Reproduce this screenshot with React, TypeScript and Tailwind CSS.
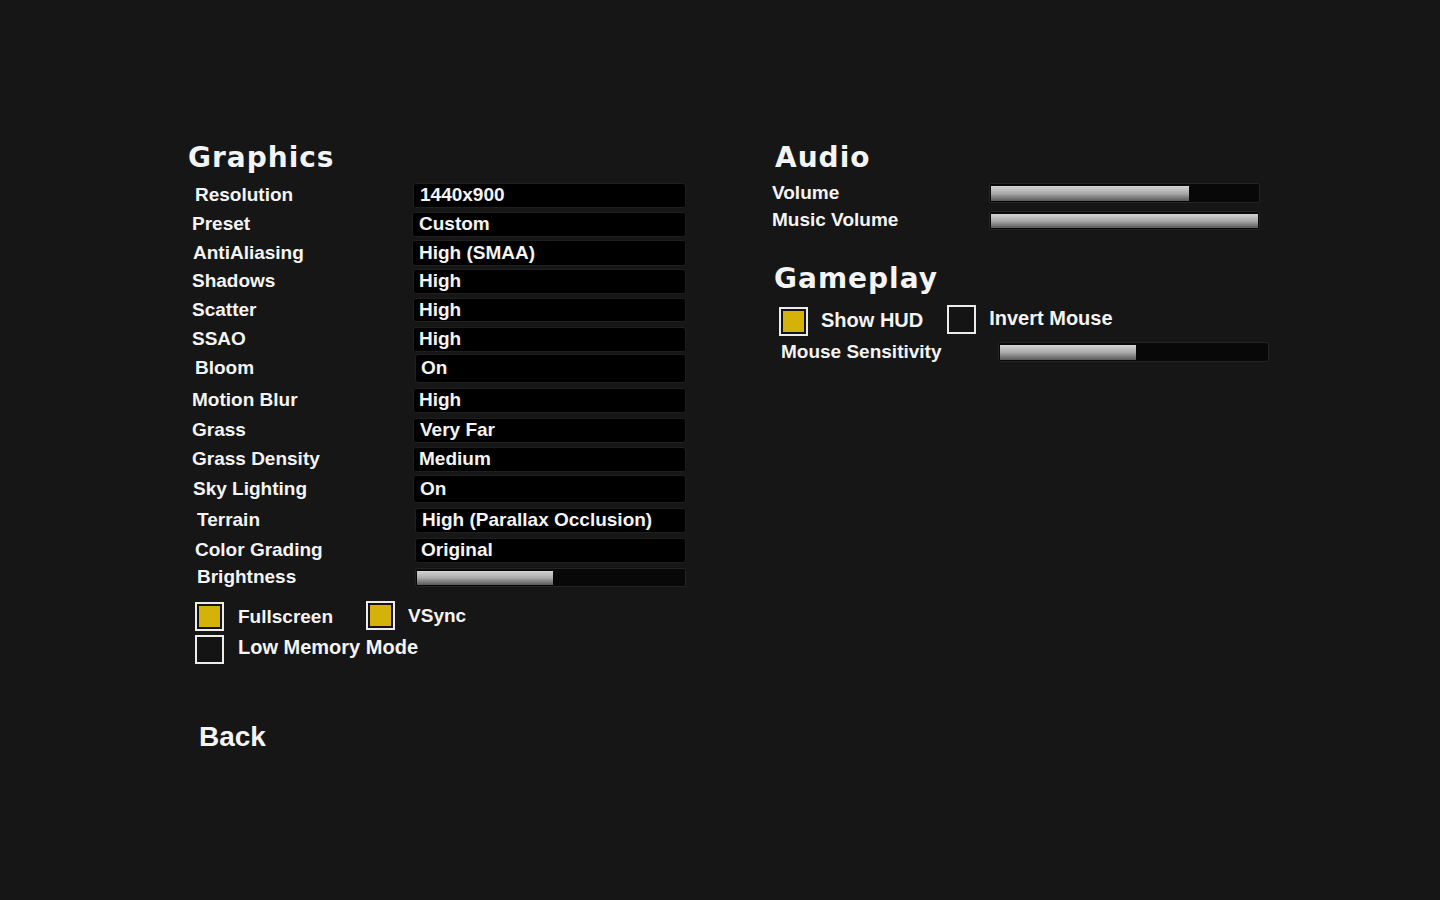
import React from 'react';

type GfxRow = {
  label: string;
  value?: string;
  row: string;
  lab: string;
  box: string;
};

const gfxRows: GfxRow[] = [
  { label: 'Resolution', value: '1440x900', row: 'mt-[11px] h-[25px]', lab: 'pl-[7px]', box: 'w-[273px] pl-[6px]' },
  { label: 'Preset', value: 'Custom', row: 'mt-[4px] h-[25px]', lab: 'pl-[4px]', box: '-ml-[1px] w-[274px] pl-[6px]' },
  { label: 'AntiAliasing', value: 'High (SMAA)', row: 'mt-[3px] h-[26px]', lab: 'pl-[5px]', box: '-ml-[1px] w-[274px] pl-[6px]' },
  { label: 'Shadows', value: 'High', row: 'mt-[3px] h-[25px]', lab: 'pl-[4px]', box: 'w-[273px] pl-[5px]' },
  { label: 'Scatter', value: 'High', row: 'mt-[4px] h-[24px]', lab: 'pl-[4px]', box: 'w-[273px] pl-[5px]' },
  { label: 'SSAO', value: 'High', row: 'mt-[5px] h-[25px]', lab: 'pl-[4px]', box: 'w-[273px] pl-[5px]' },
  { label: 'Bloom', value: 'On', row: 'mt-[2px] h-[29px]', lab: 'pl-[7px]', box: 'ml-[2px] w-[271px] pl-[5px]' },
  { label: 'Motion Blur', value: 'High', row: 'mt-[5px] h-[25px]', lab: 'pl-[4px]', box: 'w-[273px] pl-[5px]' },
  { label: 'Grass', value: 'Very Far', row: 'mt-[5px] h-[25px]', lab: 'pl-[4px]', box: 'w-[273px] pl-[6px]' },
  { label: 'Grass Density', value: 'Medium', row: 'mt-[4px] h-[25px]', lab: 'pl-[4px]', box: 'w-[273px] pl-[5px]' },
  { label: 'Sky Lighting', value: 'On', row: 'mt-[3px] h-[28px]', lab: 'pl-[5px]', box: 'w-[273px] pl-[6px]' },
  { label: 'Terrain', value: 'High (Parallax Occlusion)', row: 'mt-[5px] h-[25px]', lab: 'pl-[9px]', box: 'ml-[2px] w-[271px] pl-[6px]' },
  { label: 'Color Grading', value: 'Original', row: 'mt-[5px] h-[25px]', lab: 'pl-[7px]', box: 'ml-[2px] w-[271px] pl-[5px]' },
];

const txt = "font-['Liberation_Sans',Arial,sans-serif] font-bold text-[19px] text-[#f4f4f4]";
const head = "font-['DejaVu_Sans',sans-serif] font-bold text-[28px] leading-[39px] h-[34px] tracking-[1px] text-[#f4f4f4]";

const Slider = ({ fill, cls }: { fill: string; cls: string }) => (
  <div className={`${cls} rounded-[2px] border border-[#242424] bg-[#080808] pl-[1px] pr-[1px] pt-[2px] pb-[1px] flex`}>
    <div className={`${fill} h-full bg-linear-to-b from-[#d4d4d4] via-[#a9a9a9] to-[#5a5a5a]`} />
  </div>
);

const Check = ({ on, cls = '' }: { on?: boolean; cls?: string }) => (
  <div className={`${cls} w-[29px] h-[29px] shrink-0 border-2 border-[#ececec] bg-[#141414] p-[2px]`}>
    {on && <div className="w-full h-full bg-[#d4b20a]" />}
  </div>
);

export default function App() {
  return (
    <div className="w-full h-[900px] bg-[#161616] flex pl-[188px] pt-[138px]">
      {/* Graphics */}
      <div className="w-[584px] flex flex-col">
        <div className={head}>Graphics</div>
        {gfxRows.map((r) => (
          <div key={r.label} className={`${r.row} flex items-center`}>
            <div className={`w-[225px] ${r.lab} ${txt}`}>{r.label}</div>
            <div className={`${r.box} h-full flex items-center bg-black rounded-[3px] border border-[#1f1f1f] ${txt}`}>
              {r.value}
            </div>
          </div>
        ))}
        <div className="mt-[5px] h-[19px] flex items-center">
          <div className={`w-[225px] pl-[9px] ${txt}`}>Brightness</div>
          <Slider cls="ml-[2px] w-[271px] h-[19px]" fill="w-[136px]" />
        </div>

        <div className="mt-[14px] flex items-start pl-[7px]">
          <Check on cls="mt-[1px]" />
          <span className={`ml-[14px] mt-[2px] ${txt}`}>Fullscreen</span>
          <Check on cls="ml-[33px]" />
          <span className={`ml-[13px] mt-[1px] ${txt}`}>VSync</span>
        </div>
        <div className="mt-[3px] flex items-start pl-[7px]">
          <Check />
          <span className={`ml-[14px] -mt-[3px] ${txt} text-[20px]`}>Low Memory Mode</span>
        </div>

        <div className="mt-[57px] pl-[11px] font-['Liberation_Sans',Arial,sans-serif] font-bold text-[28px] leading-[32px] text-[#f4f4f4]">
          Back
        </div>
      </div>

      {/* Audio + Gameplay */}
      <div className="flex flex-col">
        <div className={`${head} pl-[3px]`}>Audio</div>
        <div className="mt-[11px] h-[20px] flex items-center">
          <div className={`w-[217px] ${txt}`}>Volume</div>
          <Slider cls="w-[271px] h-[20px]" fill="w-[198px]" />
        </div>
        <div className="mt-[8px] h-[19px] flex items-center">
          <div className={`w-[217px] ${txt}`}>Music Volume</div>
          <Slider cls="w-[271px] h-[19px]" fill="w-full" />
        </div>

        <div className={`${head} pl-[2px] mt-[29px]`}>Gameplay</div>
        <div className="mt-[12px] flex items-start pl-[7px]">
          <Check on cls="mt-[2px]" />
          <span className={`ml-[13px] ${txt} text-[20px]`}>Show HUD</span>
          <Check cls="ml-[24px]" />
          <span className={`ml-[13px] -mt-[2px] ${txt} text-[20px]`}>Invert Mouse</span>
        </div>
        <div className="mt-[6px] h-[20px] flex items-center pl-[9px]">
          <div className={`w-[217px] ${txt}`}>Mouse Sensitivity</div>
          <Slider cls="w-[271px] h-[20px]" fill="w-[136px]" />
        </div>
      </div>
    </div>
  );
}
